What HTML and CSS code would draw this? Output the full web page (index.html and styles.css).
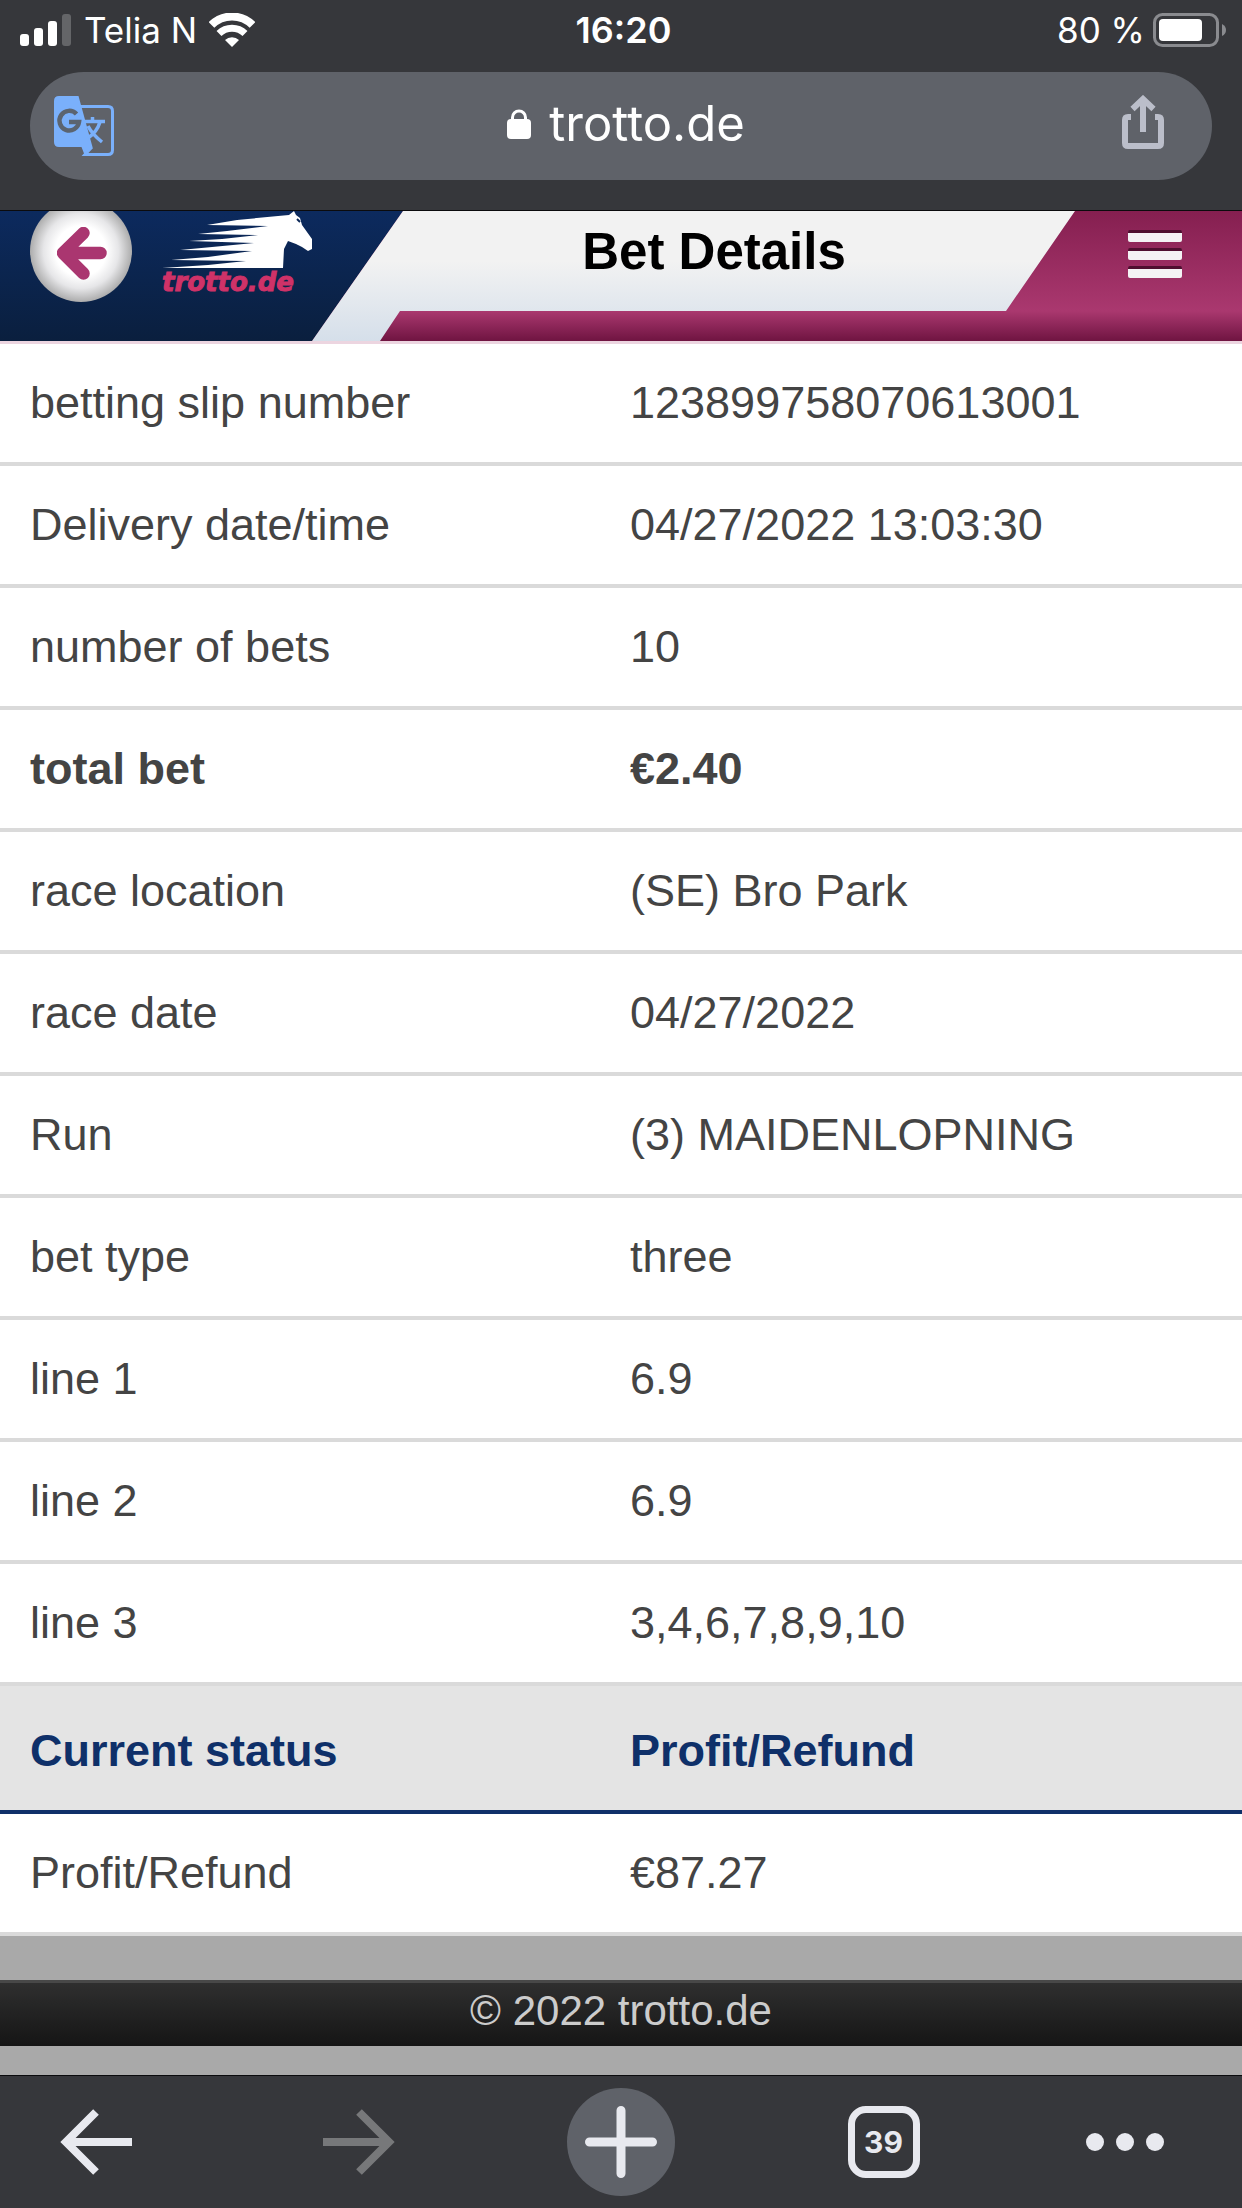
FILE: index.html
```html
<!DOCTYPE html>
<html lang="en">
<head>
<meta charset="utf-8">
<meta name="viewport" content="width=device-width, initial-scale=1">
<title>Bet Details - trotto.de</title>
<link rel="stylesheet" href="styles.css">
</head>
<body>
<div class="browser-top">
  <div class="status-bar">
    <div class="status-side">
      <svg class="signal" width="52" height="34" viewBox="0 0 52 34" aria-hidden="true">
        <rect x="0" y="21" width="9" height="12" rx="3" fill="#fff"/>
        <rect x="14" y="15" width="9" height="18" rx="3" fill="#fff"/>
        <rect x="28" y="8" width="9" height="25" rx="3" fill="#fff"/>
        <rect x="42" y="1" width="9" height="32" rx="3" fill="#646568"/>
      </svg>
      <span>Telia N</span>
      <svg width="46" height="34" viewBox="0 0 46 34" aria-hidden="true">
        <path d="M2.500 12A29 29 0 0 1 43.500 12" fill="none" stroke="#fff" stroke-width="8"/>
        <path d="M10 20.500A18.500 18.500 0 0 1 36 20.500" fill="none" stroke="#fff" stroke-width="7"/>
        <path d="M16 27A10.500 10.500 0 0 1 30 27L23 34Z" fill="#fff"/>
      </svg>
    </div>
    <time class="clock">16:20</time>
    <div class="status-side status-right">
      <span>80 %</span>
      <svg width="74" height="34" viewBox="0 0 74 34" aria-hidden="true">
        <rect x="1.500" y="1.500" width="63" height="31" rx="8" fill="none" stroke="#8a8b8f" stroke-width="3"/>
        <rect x="6" y="6" width="43" height="22" rx="4" fill="#fff"/>
        <path d="M69 11Q73 13 73 17T69 23Z" fill="#8a8b8f"/>
      </svg>
    </div>
  </div>
  <div class="omnibox">
    <button class="icon-button" type="button" aria-label="Translate">
      <svg width="60" height="60" viewBox="0 0 60 60" aria-hidden="true">
        <path d="M26 10.500H54Q58.500 10.500 58.500 15V54Q58.500 58.500 54 58.500H31L38 51" fill="none" stroke="#7ab0fb" stroke-width="3"/>
        <path d="M5 0H24.500L38.500 51L31 60L27.500 51H5Q0 51 0 46V5Q0 0 5 0Z" fill="#7ab0fb"/>
        <path d="M22.500 18A9.800 9.800 0 1 0 25 26H15" fill="none" stroke="#5b6470" stroke-width="4.500"/>
        <path d="M31 25.500H51M38.500 21V25M46 26Q43 36 34 42M34 30Q38 38 48 46" fill="none" stroke="#7ab0fb" stroke-width="3.500"/>
      </svg>
    </button>
    <div class="address">
      <svg width="24" height="30" viewBox="0 0 24 30" aria-hidden="true">
        <path d="M5.500 12V8.500A6.500 6.500 0 0 1 18.500 8.500V12" fill="none" stroke="#fff" stroke-width="3"/>
        <rect x="0" y="10" width="24" height="20" rx="4" fill="#fff"/>
      </svg>
      <span>trotto.de</span>
    </div>
    <button class="icon-button share" type="button" aria-label="Share">
      <svg width="42" height="54" viewBox="0 0 42 54" aria-hidden="true">
        <path d="M9 22H6Q3 22 3 25V48Q3 51 6 51H36Q39 51 39 48V25Q39 22 36 22H33M21 37V4M10.500 14L21 4L31.500 14" fill="none" stroke="#bbbeca" stroke-width="6"/>
      </svg>
    </button>
  </div>
</div>

<header class="site-header">
  <div class="brand">
    <button class="back" type="button" aria-label="Back">
      <svg width="50" height="53" viewBox="0 0 50 53" aria-hidden="true">
        <path d="M26.500 6L6 26L26.500 46.500M7 26H43.500" fill="none" stroke="#aa3670" stroke-width="12.500" stroke-linecap="round" stroke-linejoin="round"/>
      </svg>
    </button>
    <a class="logo" href="#">
      <svg width="152" height="58" viewBox="0 0 152 58" aria-hidden="true">
        <path fill="#fff" d="M0 57L46 54L84 50L9 49L46 46L90 40L18 39L50 36L92 32L27 30L60 28L96 24L36 23L65 20L106 15L45 14L75 9L116 5L127 4L132 0L134 4L138 7L140 14L150 28L150 38L146 40L140 36L134 33L126 30L122 38L121 57Z"/>
        <path d="M135 8L138 11" stroke="#0b2757" stroke-width="2"/>
      </svg>
      <span>trotto.de</span>
    </a>
  </div>
  <div class="plate"><h1>Bet Details</h1></div>
  <button class="menu" type="button" aria-label="Menu"><i></i><i></i><i></i></button>
</header>

<main>
  <table class="details">
    <tbody>
      <tr><th scope="row">betting slip number</th><td>123899758070613001</td></tr>
      <tr><th scope="row">Delivery date/time</th><td>04/27/2022 13:03:30</td></tr>
      <tr><th scope="row">number of bets</th><td>10</td></tr>
      <tr class="total"><th scope="row">total bet</th><td>€2.40</td></tr>
      <tr><th scope="row">race location</th><td>(SE) Bro Park</td></tr>
      <tr><th scope="row">race date</th><td>04/27/2022</td></tr>
      <tr><th scope="row">Run</th><td>(3) MAIDENLOPNING</td></tr>
      <tr><th scope="row">bet type</th><td>three</td></tr>
      <tr><th scope="row">line 1</th><td>6.9</td></tr>
      <tr><th scope="row">line 2</th><td>6.9</td></tr>
      <tr><th scope="row">line 3</th><td>3,4,6,7,8,9,10</td></tr>
      <tr class="current"><th scope="row">Current status</th><td>Profit/Refund</td></tr>
      <tr><th scope="row">Profit/Refund</th><td>€87.27</td></tr>
    </tbody>
  </table>
  <footer class="site-footer">© 2022 trotto.de</footer>
</main>

<nav class="toolbar" aria-label="Browser">
  <button type="button" aria-label="Back">
    <svg width="72" height="66" viewBox="0 0 72 66" aria-hidden="true"><path d="M72 33H8M36 3L6 33L36 63" fill="none" stroke="#e8e9ef" stroke-width="8"/></svg>
  </button>
  <button type="button" aria-label="Forward">
    <svg width="72" height="66" viewBox="0 0 72 66" aria-hidden="true"><path d="M0 33H64M36 3L66 33L36 63" fill="none" stroke="#77787a" stroke-width="8"/></svg>
  </button>
  <button class="new-tab" type="button" aria-label="New tab">
    <svg width="72" height="72" viewBox="0 0 72 72" aria-hidden="true"><path d="M36 4.500V67.500M4.500 36H67.500" fill="none" stroke="#e8e9ef" stroke-width="9" stroke-linecap="round"/></svg>
  </button>
  <button type="button" aria-label="Open tabs"><span class="tab-count">39</span></button>
  <button class="more" type="button" aria-label="More">
    <svg width="78" height="18" viewBox="0 0 78 18" aria-hidden="true"><g fill="#e8e9ef"><circle cx="9" cy="9" r="9"/><circle cx="39" cy="9" r="9"/><circle cx="69" cy="9" r="9"/></g></svg>
  </button>
</nav>
</body>
</html>
```
FILE: styles.css
```css
* { box-sizing: border-box; }

body {
  margin: 0;
  min-height: 100vh;
  display: flex;
  flex-direction: column;
  background: #36373b;
  font-family: "Liberation Sans", Arial, sans-serif;
}

button {
  margin: 0;
  padding: 0;
  border: 0;
  background: none;
  font: inherit;
  color: inherit;
}

svg { display: block; flex: none; }

/* Browser chrome */
.browser-top {
  padding: 0 30px 30px;
  border-bottom: 1px solid #0b0b0d;
  color: #fff;
  font-family: Inter, sans-serif;
}

.status-bar {
  display: grid;
  grid-template-columns: 1fr auto 1fr;
  align-items: center;
  height: 72px;
  margin: 0 -15px 0 -10px;
  padding-bottom: 12px;
  font-size: 35px;
  line-height: 44px;
}

.status-side { display: flex; align-items: center; gap: 12px; }
.status-right { justify-content: flex-end; gap: 8px; }
.clock { font-size: 36px; font-weight: 600; }

.omnibox {
  display: grid;
  grid-template-columns: 1fr auto 1fr;
  align-items: center;
  height: 108px;
  padding: 0 48px 0 24px;
  border-radius: 54px;
  background: #5f6269;
}

.icon-button { justify-self: start; }
.share { justify-self: end; padding-bottom: 8px; }

.address {
  display: flex;
  align-items: center;
  gap: 18px;
  padding: 0 0 4px 34px;
  font-size: 49px;
  line-height: 60px;
}

/* Site header */
.site-header {
  display: flex;
  height: 133px;
  overflow: hidden;
  border-bottom: 3px solid #ecd5e0;
  background: linear-gradient(#851f50 0, #aa386f 100px, #6f1441 130px);
}

.brand {
  display: flex;
  gap: 30px;
  width: 403px;
  padding-left: 30px;
  background: linear-gradient(#0c2a5e, #0a1f3e);
  clip-path: polygon(0 0, 100% 0, 312px 100%, 0 100%);
}

.back {
  display: flex;
  align-items: center;
  justify-content: center;
  flex: none;
  width: 102px;
  height: 102px;
  margin-top: -11px;
  padding: 4px 0 0 2px;
  border-radius: 50%;
  background: radial-gradient(circle, #fff 35%, #e6e6e8 52%, #a8a8a8 72%);
}

.logo {
  display: flex;
  flex-direction: column;
  color: #cf3268;
  font: italic bold 26px/26px "DejaVu Sans", sans-serif;
  text-decoration: none;
  -webkit-text-stroke: 1px #cf3268;
}

.plate {
  display: flex;
  flex: 1;
  justify-content: center;
  margin-left: -91px;
  padding: 13px 0 0 41px;
  background: linear-gradient(#f2f2f2 50px, #d5dfea 100%);
  clip-path: polygon(91px 0, 100% 0, calc(100% - 69px) 100px, 88px 100px, 68px 100%, 0 100%);
}

h1 {
  margin: 0;
  color: #000;
  font-size: 51px;
  line-height: 56px;
}

.menu {
  display: flex;
  flex-direction: column;
  gap: 6px;
  width: 167px;
  padding: 19px 0 0 53px;
}

.menu i {
  width: 54px;
  height: 12px;
  border-top: 3px solid #4f0f30;
  border-radius: 2px;
  background: #f4f2f4;
}

/* Bet details */
main { flex: 1; background: #a9a9a9; }

.details {
  width: 100%;
  border-collapse: separate;
  border-spacing: 0;
  background: #fff;
  color: #444;
  font-size: 45px;
  line-height: 54px;
}

.details th,
.details td {
  width: 50%;
  padding: 32px 0 32px 9px;
  border-bottom: 4px solid #dadada;
  font-weight: normal;
  text-align: left;
}

.details th { padding-left: 30px; }

.details .total th,
.details .total td,
.details .current th,
.details .current td { font-weight: bold; }

.details .current th,
.details .current td {
  padding-top: 38px;
  border-color: #0f3069;
  background: #e4e4e4;
  color: #0f3069;
}

.site-footer {
  margin: 44px 0 29px;
  border-top: 3px solid #484848;
  background: linear-gradient(#2f2f2f, #151515);
  color: #ccc;
  font-size: 42px;
  line-height: 56px;
  padding-bottom: 7px;
  text-align: center;
}

/* Bottom toolbar */
.toolbar {
  display: flex;
  align-items: center;
  justify-content: space-between;
  padding: 12px 84px 12px 42px;
  border-top: 1px solid #0b0b0d;
}

.toolbar button {
  display: flex;
  align-items: center;
  justify-content: center;
  width: 108px;
  height: 108px;
  border-radius: 50%;
}

.toolbar .new-tab { background: #5f6269; }
.toolbar .more { width: 66px; }

.tab-count {
  width: 72px;
  height: 72px;
  border: 7px solid #e8e9ef;
  border-radius: 18px;
  color: #e8e9ef;
  font: bold 30px/58px Inter, sans-serif;
  text-align: center;
}
```
